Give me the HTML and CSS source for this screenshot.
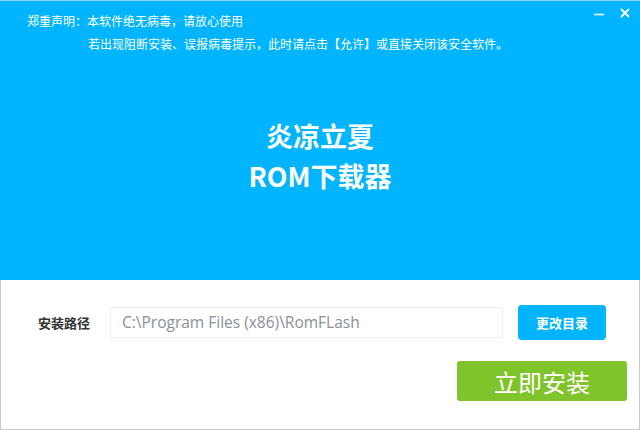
FILE: index.html
```html
<!DOCTYPE html>
<html lang="zh-CN">
<head>
<meta charset="utf-8">
<title>炎凉立夏 ROM下载器</title>
<link rel="stylesheet" href="styles.css">
</head>
<body>
<div class="window">
  <header class="hero">
    <div class="topbar">
      <div class="notice">
        <p class="notice-line">郑重声明：本软件绝无病毒，请放心使用</p>
        <p class="notice-line indent">若出现阻断安装、误报病毒提示，此时请点击【允许】或直接关闭该安全软件。</p>
      </div>
      <div class="controls">
        <span class="ctl ctl-min" title="最小化"><svg width="12" height="12" viewBox="0 0 12 12"><path d="M1 7.5h10" stroke="#fff" stroke-width="1.6"/></svg></span>
        <span class="ctl ctl-close" title="关闭"><svg width="12" height="12" viewBox="0 0 12 12"><path d="M2 2l8 8M10 2l-8 8" stroke="#fff" stroke-width="1.8"/></svg></span>
      </div>
    </div>
    <h1 class="title">炎凉立夏<br>ROM下载器</h1>
  </header>
  <main class="panel">
    <div class="path-row">
      <span class="label">安装路径</span>
      <div class="path-input">C:\Program Files (x86)\RomFLash</div>
      <button class="btn btn-browse">更改目录</button>
    </div>
    <div class="action-row">
      <button class="btn btn-install">立即安装</button>
    </div>
  </main>
</div>
</body>
</html>
```

FILE: styles.css
```css
* { box-sizing: border-box; }
html, body { margin: 0; padding: 0; background: #fff; }
body {
  font-family: "Noto Sans CJK SC", "Noto Sans", sans-serif;
  width: 640px;
  height: 430px;
  overflow: hidden;
}
.window {
  width: 640px;
  height: 430px;
  display: flex;
  flex-direction: column;
}
.hero {
  height: 280px;
  background: #00b4ff;
  border-top: 1px solid #8fd3f2;
  color: #fff;
  display: flex;
  flex-direction: column;
}
.topbar {
  display: flex;
  justify-content: space-between;
  align-items: flex-start;
}
.notice {
  padding: 8px 0 0 27px;
}
.notice-line {
  margin: 0;
  font-size: 12px;
  line-height: 23px;
}
.notice-line.indent { padding-left: 61px; }
.controls {
  display: flex;
  gap: 14px;
  padding: 6px 9px 0 0;
}
.ctl {
  width: 12px;
  height: 12px;
  display: flex;
}
.title {
  margin: 0;
  padding-top: 61px;
  text-align: center;
  font-size: 27px;
  font-weight: bold;
  line-height: 40px;
}
.panel {
  flex: 1;
  border: 1px solid #c9c9c9;
  border-top: none;
  padding: 25px 12px 0 37px;
  display: flex;
  flex-direction: column;
}
.path-row {
  display: flex;
  align-items: center;
}
.label {
  font-size: 13px;
  font-weight: bold;
  color: #333;
  width: 72px;
}
.path-input {
  width: 393px;
  height: 31px;
  border: 1px solid #ebeef3;
  border-radius: 2px;
  padding: 0 11px;
  font-size: 15.5px;
  line-height: 29px;
  color: #8a9099;
  font-family: "Open Sans", "Noto Sans CJK SC", sans-serif;
  white-space: nowrap;
}
.btn {
  border: none;
  color: #fff;
  font-family: "Noto Sans CJK SC", sans-serif;
  cursor: pointer;
  padding: 0;
}
.btn-browse {
  margin-left: 15px;
  width: 88px;
  height: 35px;
  border-radius: 4px;
  background: #00b4ff;
  font-size: 13px;
  font-weight: bold;
}
.action-row {
  display: flex;
  justify-content: flex-end;
  margin-top: 21px;
}
.btn-install {
  width: 170px;
  height: 40px;
  border-radius: 3px;
  background: #80c42b;
  font-size: 24px;
}
```
